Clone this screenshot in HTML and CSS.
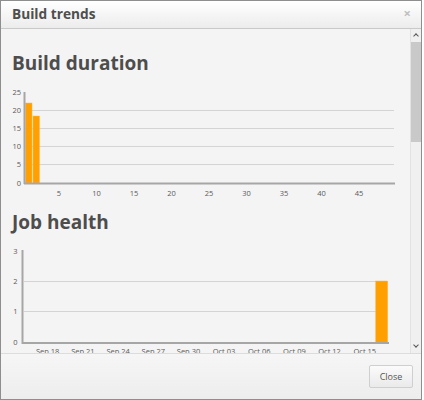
FILE: index.html
```html
<!DOCTYPE html>
<html>
<head>
<meta charset="utf-8">
<link rel="stylesheet" href="styles.css">
</head>
<body>
<div class="dialog">
  <div class="header">
    <span class="title">Build trends</span>
    <span class="close-x">×</span>
  </div>
  <div class="body">
    <div class="content">
      <h2 class="heading first">Build duration</h2>
      <svg class="chart c1" width="410" height="125" viewBox="1 75 410 125">
        <g class="grid">
          <line x1="25" y1="110.5" x2="394" y2="110.5"/>
          <line x1="25" y1="128.5" x2="394" y2="128.5"/>
          <line x1="25" y1="146.5" x2="394" y2="146.5"/>
          <line x1="25" y1="164.5" x2="394" y2="164.5"/>
        </g>
        <rect class="bar" x="25.5" y="103" width="6.5" height="80"/>
        <rect class="bar" x="33" y="116" width="6.5" height="67"/>
        <line class="axis" x1="24.5" y1="92" x2="24.5" y2="184"/>
        <line class="axis" x1="24" y1="183.5" x2="395" y2="183.5"/>
        <g class="ylab">
          <text x="21" y="94.5">25</text>
          <text x="21" y="112.5">20</text>
          <text x="21" y="130.5">15</text>
          <text x="21" y="149">10</text>
          <text x="21" y="167">5</text>
          <text x="21" y="185.5">0</text>
        </g>
        <g class="xlab">
          <text x="59" y="195.5">5</text>
          <text x="96.5" y="195.5">10</text>
          <text x="134" y="195.5">15</text>
          <text x="171.5" y="195.5">20</text>
          <text x="209" y="195.5">25</text>
          <text x="246.5" y="195.5">30</text>
          <text x="284" y="195.5">35</text>
          <text x="321.5" y="195.5">40</text>
          <text x="359" y="195.5">45</text>
        </g>
      </svg>
      <h2 class="heading second">Job health</h2>
      <svg class="chart c2" width="410" height="130" viewBox="1 234 410 130">
        <g class="grid">
          <line x1="24" y1="281.5" x2="376" y2="281.5"/>
          <line x1="24" y1="311.5" x2="376" y2="311.5"/>
        </g>
        <rect class="bar" x="375.7" y="281" width="12" height="62"/>
        <line class="axis" x1="22.5" y1="250" x2="22.5" y2="344"/>
        <line class="axis" x1="22" y1="343" x2="389" y2="343"/>
        <g class="ylab">
          <text x="17.5" y="253.5">3</text>
          <text x="17.5" y="284">2</text>
          <text x="17.5" y="314">1</text>
          <text x="17.5" y="345">0</text>
        </g>
        <g class="xlab">
          <text x="47.7" y="354">Sep 18</text>
          <text x="82.9" y="354">Sep 21</text>
          <text x="118.1" y="354">Sep 24</text>
          <text x="153.3" y="354">Sep 27</text>
          <text x="188.5" y="354">Sep 30</text>
          <text x="224" y="354">Oct 03</text>
          <text x="259.2" y="354">Oct 06</text>
          <text x="294.4" y="354">Oct 09</text>
          <text x="329.6" y="354">Oct 12</text>
          <text x="364.8" y="354">Oct 15</text>
        </g>
      </svg>
    </div>
    <div class="scrollbar">
      <div class="arrow up"></div>
      <div class="track"><div class="thumb"></div></div>
      <div class="arrow down"></div>
    </div>
  </div>
  <div class="footer">
    <button class="btn">Close</button>
  </div>
</div>
</body>
</html>
```
FILE: styles.css
```css
html, body {
  margin: 0;
  padding: 0;
  background: #ffffff;
}
.dialog {
  width: 422px;
  height: 400px;
  box-sizing: border-box;
  border: 1px solid #8e8e8e;
  display: flex;
  flex-direction: column;
  font-family: "Open Sans", "DejaVu Sans", sans-serif;
  background: #f4f4f4;
  overflow: hidden;
}
.header {
  height: 28px;
  flex: none;
  box-sizing: border-box;
  border-bottom: 1px solid #c9c9c9;
  background: linear-gradient(#ffffff, #ececec);
  display: flex;
  align-items: center;
  justify-content: space-between;
  padding: 0 10px 0 11px;
}
.title {
  font-size: 13.7px;
  font-weight: bold;
  color: #4e4e4e;
  line-height: 20px;
  margin-top: -1px;
}
.close-x {
  font-size: 13px;
  font-weight: bold;
  color: #c0c0c0;
  line-height: 14px;
  margin-top: -3px;
}
.body {
  flex: 1;
  display: flex;
  min-height: 0;
  background: #f4f4f4;
  border-bottom: 1px solid #dcdcdc;
}
.content {
  flex: 1;
  overflow: hidden;
}
.heading {
  margin: 0 0 0 11px;
  font-size: 19px;
  line-height: 24px;
  font-weight: bold;
  color: #4d4d4d;
}
.heading.first { margin-top: 22px; }
.heading.second { margin-top: 10px; }
.chart {
  display: block;
}
.grid line {
  stroke: #d4d4d4;
  stroke-width: 1;
}
.axis {
  stroke: #a6a6a6;
  stroke-width: 2;
}
.bar {
  fill: #ffa000;
  stroke: #ffb640;
  stroke-width: 0.5;
}
.ylab text {
  font-family: "Open Sans", sans-serif;
  font-size: 7.5px;
  fill: #5a5a5a;
  text-anchor: end;
}
.xlab text {
  font-family: "Open Sans", sans-serif;
  font-size: 7.5px;
  fill: #5a5a5a;
  text-anchor: middle;
}
.scrollbar {
  width: 10px;
  flex: none;
  display: flex;
  flex-direction: column;
  background: #f0f0f0;
  border-left: 1px solid #e2e2e2;
}
.arrow {
  height: 13px;
  flex: none;
  position: relative;
}
.arrow::before {
  content: "";
  position: absolute;
  left: 3px;
  width: 3px;
  height: 3px;
  border-left: 1.2px solid #555;
  border-top: 1.2px solid #555;
}
.arrow.up::before {
  top: 5px;
  transform: rotate(45deg);
}
.arrow.down::before {
  top: 3px;
  transform: rotate(225deg);
}
.track {
  flex: 1;
}
.thumb {
  height: 100px;
  background: #c9c9c9;
}
.footer {
  height: 45px;
  flex: none;
  box-sizing: border-box;
  background: linear-gradient(#f6f6f6, #ededed);
  display: flex;
  align-items: center;
  justify-content: flex-end;
  padding: 0 8px 1px 0;
}
.btn {
  font-family: "Open Sans", sans-serif;
  font-size: 9px;
  color: #555;
  width: 44px;
  height: 23px;
  padding: 0;
  border: 1px solid #cfcfcf;
  border-radius: 2px;
  background: linear-gradient(#fbfbfb, #eaeaea);
}
```
